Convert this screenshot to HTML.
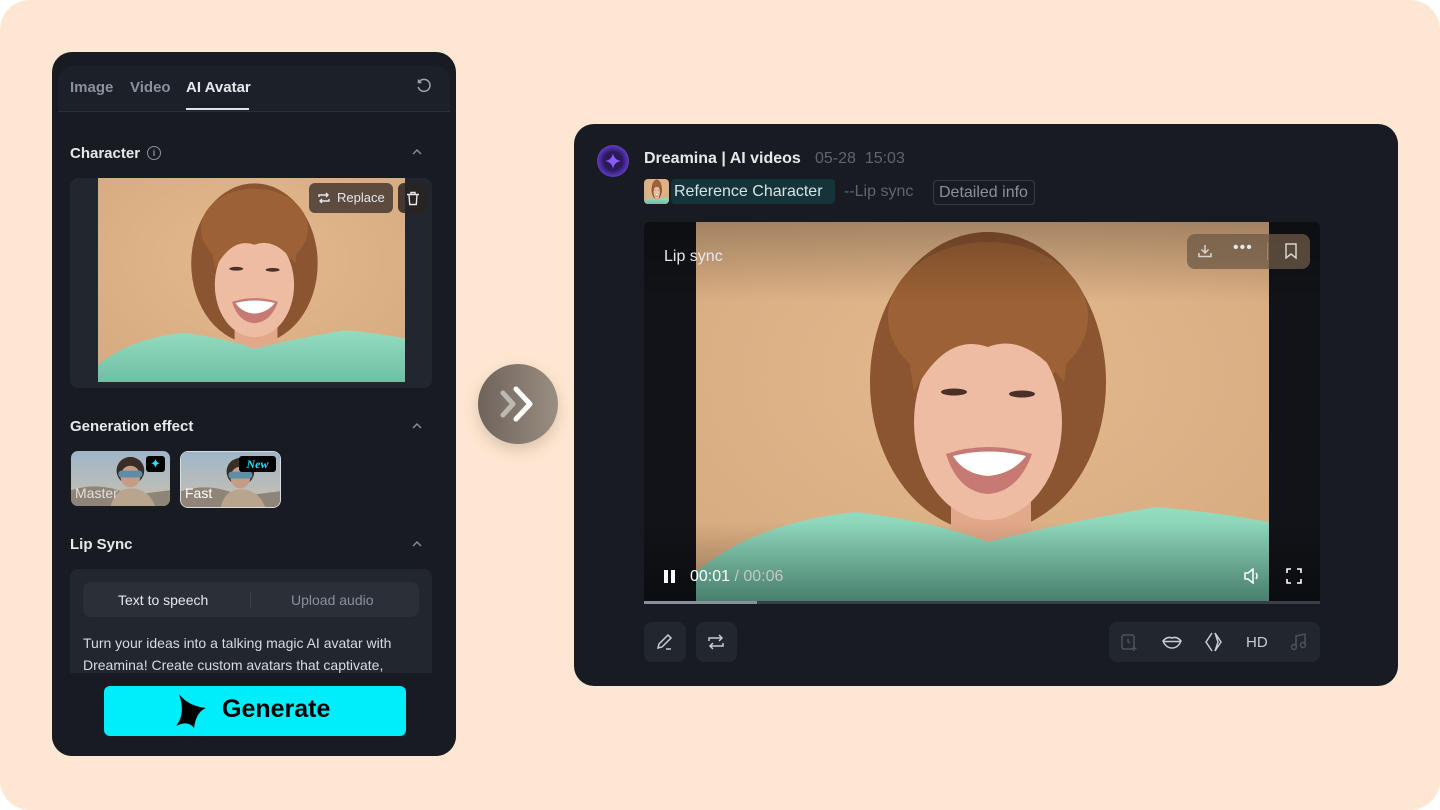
<!DOCTYPE html>
<html><head><meta charset="utf-8"><style>
*{margin:0;padding:0;box-sizing:border-box}
body{width:1440px;height:810px;background:#ffffff;font-family:"Liberation Sans",sans-serif;overflow:hidden;position:relative}
.bg{position:absolute;left:0;top:0;width:1440px;height:810px;background:#fde7d2;border-radius:30px}
.abs{position:absolute}
.panel{background:#181b22;border-radius:20px}
.t{position:absolute;white-space:nowrap}
</style></head><body>
<div class="bg"></div>
<svg width="0" height="0" style="position:absolute">
<defs>
<symbol id="por" viewBox="0 0 573 382" preserveAspectRatio="none">
<defs>
<radialGradient id="bgg" cx="0.5" cy="0.4" r="0.7"><stop offset="0" stop-color="#e3b98e"/><stop offset="1" stop-color="#d7ab80"/></radialGradient>
<linearGradient id="sh" x1="0" y1="0" x2="0" y2="1"><stop offset="0" stop-color="#95dcc0"/><stop offset="1" stop-color="#6fbfa5"/></linearGradient>
</defs>
<rect width="573" height="382" fill="url(#bgg)"/>
<ellipse cx="292" cy="160" rx="118" ry="150" fill="#8a5530"/>
<ellipse cx="292" cy="95" rx="100" ry="75" fill="#9c6236"/>
<rect x="255" y="260" width="80" height="70" fill="#e2a88a"/>
<ellipse cx="292" cy="200" rx="74" ry="98" fill="#edbca2"/>
<path d="M212 130 Q292 50 372 130 L368 160 Q330 110 292 125 Q250 110 218 170 Z" fill="#9c6236"/>
<ellipse cx="258" cy="170" rx="13" ry="3.5" fill="#4a3026"/>
<ellipse cx="326" cy="172" rx="13" ry="3.5" fill="#4a3026"/>
<path d="M250 232 Q292 218 336 232 Q322 270 292 272 Q262 270 250 232Z" fill="#c77a74"/>
<path d="M257 234 Q292 225 330 234 Q316 252 292 254 Q268 252 257 234Z" fill="#fff"/>
<path d="M0 382 L0 350 Q60 300 160 290 Q240 300 292 320 Q370 300 460 285 Q520 290 573 300 L573 382 Z" fill="url(#sh)"/>
</symbol>
<symbol id="moto" viewBox="0 0 100 56" preserveAspectRatio="none">
<defs><linearGradient id="sk" x1="0" y1="0" x2="0" y2="1"><stop offset="0" stop-color="#9fb6c8"/><stop offset="1" stop-color="#c9c0b0"/></linearGradient></defs>
<rect width="100" height="56" fill="url(#sk)"/>
<path d="M0 40 Q30 30 60 45 L100 40 L100 56 L0 56Z" fill="#8f8478"/>
<ellipse cx="60" cy="20" rx="14" ry="14" fill="#3a2d26"/>
<ellipse cx="60" cy="26" rx="10" ry="11" fill="#c79c84"/>
<rect x="48" y="20" width="24" height="7" rx="3" fill="#5d8ea8"/>
<path d="M40 56 Q45 38 60 38 Q78 38 85 56Z" fill="#b9a58e"/>
</symbol>
</defs></svg>

<!-- LEFT PANEL -->
<div class="abs panel" style="left:52px;top:52px;width:404px;height:704px;overflow:hidden">
  <div class="abs" style="left:6px;top:14px;width:392px;height:46px;background:#1c2029;border-bottom:1px solid #2a2e37;border-radius:14px 14px 0 0"></div>
  <div class="t" style="left:18px;top:27px;font-size:15px;color:#8a909b;font-weight:bold">Image</div>
  <div class="t" style="left:78px;top:27px;font-size:15px;color:#8a909b;font-weight:bold">Video</div>
  <div class="t" style="left:134px;top:27px;font-size:15px;color:#e6e8ec;font-weight:bold">AI Avatar</div>
  <div class="abs" style="left:134px;top:56px;width:63px;height:2px;background:#dfe3ea"></div>
  <svg class="abs" style="left:364px;top:26px" width="16" height="16" viewBox="0 0 16 16" fill="none" stroke="#a0a5ae" stroke-width="1.5"><path d="M3 4 A6 6 0 1 1 2.2 9"/><path d="M2.5 1.5 V4.5 H5.5"/></svg>

  <div class="t" style="left:18px;top:93px;font-size:15px;color:#e6e8ec;font-weight:bold">Character</div>
  <div class="abs" style="left:95px;top:94px;width:14px;height:14px;border:1.3px solid #8a909b;border-radius:50%;color:#8a909b;font-size:9px;text-align:center;line-height:12px;font-weight:bold">i</div>
  <svg class="abs" style="left:359px;top:96px" width="12" height="8" viewBox="0 0 12 8" fill="none" stroke="#8a909b" stroke-width="1.4"><path d="M2 6 L6 2 L10 6"/></svg>

  <div class="abs" style="left:18px;top:126px;width:362px;height:210px;background:#22262e;border-radius:8px;overflow:hidden">
    <svg class="abs" style="left:28px;top:0" width="307" height="204"><use href="#por" width="307" height="204"/></svg>
    <div class="abs" style="left:239px;top:5px;width:84px;height:30px;background:rgba(70,58,50,0.85);border-radius:6px"></div>
    <svg class="abs" style="left:247px;top:13px" width="14" height="14" viewBox="0 0 14 14" fill="none" stroke="#e6e8ec" stroke-width="1.4"><path d="M2 6 V4 H11 M9 2 L11 4 L9 6"/><path d="M12 8 V10 H3 M5 12 L3 10 L5 8"/></svg>
    <div class="t" style="left:267px;top:12px;font-size:13px;color:#e6e8ec">Replace</div>
    <div class="abs" style="left:328px;top:5px;width:30px;height:30px;background:rgba(40,36,34,0.85);border-radius:6px"></div>
    <svg class="abs" style="left:336px;top:13px" width="14" height="15" viewBox="0 0 14 15" fill="none" stroke="#e6e8ec" stroke-width="1.4"><path d="M1 3.5 H13 M5 3.5 V1.5 H9 V3.5 M3 3.5 L3.7 13.5 H10.3 L11 3.5"/></svg>
  </div>

  <div class="t" style="left:18px;top:366px;font-size:15px;color:#e6e8ec;font-weight:bold">Generation effect</div>
  <svg class="abs" style="left:359px;top:370px" width="12" height="8" viewBox="0 0 12 8" fill="none" stroke="#8a909b" stroke-width="1.4"><path d="M2 6 L6 2 L10 6"/></svg>
  <div class="abs" style="left:19px;top:399px;width:99px;height:55px;border-radius:7px;overflow:hidden">
    <svg width="99" height="55"><use href="#moto" width="99" height="55"/></svg>
    <div class="abs" style="left:75px;top:5px;width:19px;height:16px;background:#000;border-radius:3px;color:#1ee8ff;font-size:13px;text-align:center;line-height:16px">✦</div>
    <div class="t" style="left:4px;top:34px;font-size:14px;color:rgba(255,255,255,.75)">Master</div>
  </div>
  <div class="abs" style="left:128px;top:399px;width:101px;height:57px;border-radius:8px;overflow:hidden;border:1.5px solid #d8dde4">
    <svg width="99" height="55"><use href="#moto" width="99" height="55"/></svg>
    <div class="abs" style="left:58px;top:4px;width:37px;height:16px;background:#000;border-radius:3px;color:#1ee8ff;font-size:12px;text-align:center;line-height:16px;font-style:italic;font-weight:bold;font-family:'Liberation Serif',serif">New</div>
    <div class="t" style="left:4px;top:33px;font-size:14px;color:#fff">Fast</div>
  </div>

  <div class="t" style="left:18px;top:484px;font-size:15px;color:#e6e8ec;font-weight:bold">Lip Sync</div>
  <svg class="abs" style="left:359px;top:488px" width="12" height="8" viewBox="0 0 12 8" fill="none" stroke="#8a909b" stroke-width="1.4"><path d="M2 6 L6 2 L10 6"/></svg>
  <div class="abs" style="left:18px;top:517px;width:362px;height:110px;background:#22262e;border-radius:8px 8px 0 0"></div>
  <div class="abs" style="left:31px;top:530px;width:336px;height:35px;background:#2b2f38;border-radius:8px"></div>
  <div class="abs" style="left:198px;top:539px;width:1px;height:18px;background:#3a3e47"></div>
  <div class="t" style="left:66px;top:540px;font-size:14px;color:#e6e8ec">Text to speech</div>
  <div class="t" style="left:239px;top:540px;font-size:14px;color:#8a909b">Upload audio</div>
  <div class="t" style="left:31px;top:580px;font-size:14px;color:#d8dbe0;line-height:22px">Turn your ideas into a talking magic AI avatar with<br>Dreamina! Create custom avatars that captivate,</div>
  <div class="abs" style="left:0;top:621px;width:404px;height:83px;background:#181b22"></div>
  <div class="abs" style="left:52px;top:634px;width:302px;height:50px;background:#00eefc;border-radius:6px"></div>
  <svg class="abs" style="left:124px;top:640px" width="32" height="38" viewBox="0 0 32 38"><path d="M3 2 Q12 14 30 16 Q20 20 18 36 Q12 28 0 34 Q10 22 3 2Z" fill="#000"/></svg>
  <div class="t" style="left:170px;top:643px;font-size:25px;color:#000;font-weight:bold">Generate</div>
</div>

<!-- ARROW -->
<div class="abs" style="left:478px;top:364px;width:80px;height:80px;border-radius:50%;background:linear-gradient(90deg,#6e635b,#9a8e82);box-shadow:0 6px 14px rgba(120,90,60,.25)"></div>
<svg class="abs" style="left:495px;top:380px" width="50" height="50" viewBox="0 0 50 50" fill="none" stroke-linecap="round" stroke-linejoin="round"><path d="M8 13 L18 24 L8 35" stroke="#bdb8b2" stroke-width="5"/><path d="M21 9 L35 24 L21 39" stroke="#fff" stroke-width="5"/></svg>

<!-- RIGHT PANEL -->
<div class="abs panel" style="left:574px;top:124px;width:824px;height:562px;overflow:hidden">
  <div class="abs" style="left:23px;top:21px;width:32px;height:32px;border-radius:50%;background:radial-gradient(circle,#2a1a5a 40%,#6a3fd8 75%)"></div>
  <svg class="abs" style="left:31px;top:29px" width="16" height="16" viewBox="0 0 16 16"><path d="M8 0 Q9 7 16 8 Q9 9 8 16 Q7 9 0 8 Q7 7 8 0Z" fill="#8a5cf6"/></svg>
  <div class="t" style="left:70px;top:26px;font-size:16px;color:#e6e8ec;font-weight:bold">Dreamina | AI videos</div>
  <div class="t" style="left:241px;top:26px;font-size:16px;color:#5f6570">05-28&nbsp;&nbsp;15:03</div>
  <div class="abs" style="left:70px;top:55px;width:25px;height:25px;border-radius:4px;overflow:hidden"><svg width="25" height="25"><use href="#por" width="25" height="25"/></svg></div>
  <div class="abs" style="left:97px;top:55px;width:164px;height:25px;background:#15343a;border-radius:4px"></div>
  <div class="t" style="left:100px;top:59px;font-size:16px;color:#d8e2e6">Reference Character</div>
  <div class="t" style="left:270px;top:59px;font-size:16px;color:#5f6570">--Lip sync</div>
  <div class="abs" style="left:359px;top:56px;width:102px;height:25px;border:1px solid #363a44;border-radius:4px"></div>
  <div class="t" style="left:365px;top:60px;font-size:16px;color:#8a909b">Detailed info</div>

  <div class="abs" style="left:70px;top:98px;width:676px;height:382px;background:#111318;border-radius:6px 6px 0 0;overflow:hidden">
    <svg class="abs" style="left:52px;top:0" width="573" height="382"><use href="#por" width="573" height="382"/></svg>
    <div class="abs" style="left:0;top:0;width:676px;height:80px;background:linear-gradient(rgba(0,0,0,.25),transparent)"></div>
    <div class="abs" style="left:0;top:300px;width:676px;height:82px;background:linear-gradient(transparent,rgba(0,0,0,.35))"></div>
    <div class="t" style="left:20px;top:26px;font-size:16px;color:#e6e8ec">Lip sync</div>
    <div class="abs" style="left:543px;top:12px;width:123px;height:35px;background:rgba(110,90,70,.75);border-radius:8px"></div>
    <svg class="abs" style="left:553px;top:21px" width="16" height="16" viewBox="0 0 16 16" fill="none" stroke="#d8d4cf" stroke-width="1.5"><path d="M8 2 V10 M4.5 6.5 L8 10 L11.5 6.5 M2 10 V13.5 H14 V10"/></svg>
    <div class="t" style="left:589px;top:17px;font-size:16px;color:#e6e8ec;letter-spacing:1px">•••</div>
    <div class="abs" style="left:623px;top:20px;width:1px;height:18px;background:rgba(255,255,255,.2)"></div>
    <svg class="abs" style="left:640px;top:21px" width="14" height="16" viewBox="0 0 14 16" fill="none" stroke="#d8d4cf" stroke-width="1.5"><path d="M2 1 H12 V15 L7 11 L2 15Z"/></svg>
    <div class="abs" style="left:20px;top:348px;width:4px;height:13px;background:#fff"></div>
    <div class="abs" style="left:27px;top:348px;width:4px;height:13px;background:#fff"></div>
    <div class="t" style="left:46px;top:346px;font-size:16px;color:#fff">00:01 <span style="color:#c6c6c6">/ 00:06</span></div>
    <svg class="abs" style="left:599px;top:346px" width="20" height="16" viewBox="0 0 20 16" fill="none" stroke="#fff" stroke-width="1.5"><path d="M2 5 H5 L10 1 V15 L5 11 H2Z"/><path d="M13 5 Q15 8 13 11"/></svg>
    <svg class="abs" style="left:642px;top:346px" width="16" height="16" viewBox="0 0 16 16" fill="none" stroke="#fff" stroke-width="1.6"><path d="M1 5 V1 H5 M11 1 H15 V5 M15 11 V15 H11 M5 15 H1 V11"/></svg>
    <div class="abs" style="left:0;top:379px;width:676px;height:3px;background:#3a3e46"></div>
    <div class="abs" style="left:0;top:379px;width:113px;height:3px;background:#8a8f98"></div>
  </div>

  <div class="abs" style="left:70px;top:498px;width:42px;height:40px;background:#22262e;border-radius:8px"></div>
  <svg class="abs" style="left:82px;top:509px" width="18" height="18" viewBox="0 0 18 18" fill="none" stroke="#c9ccd2" stroke-width="1.5"><path d="M2 15 L3 11 L12 2 L15 5 L6 14 Z M10 16 H15"/></svg>
  <div class="abs" style="left:122px;top:498px;width:41px;height:40px;background:#22262e;border-radius:8px"></div>
  <svg class="abs" style="left:133px;top:509px" width="18" height="18" viewBox="0 0 18 18" fill="none" stroke="#c9ccd2" stroke-width="1.5"><path d="M2 8 V5 H15 M12 2 L15 5 L12 8"/><path d="M16 10 V13 H3 M6 16 L3 13 L6 10"/></svg>
  <div class="abs" style="left:535px;top:498px;width:211px;height:40px;background:#22262e;border-radius:8px"></div>
  <svg class="abs" style="left:546px;top:509px" width="18" height="19" viewBox="0 0 18 19" fill="none" stroke="#4c515a" stroke-width="1.5"><rect x="2" y="2" width="12" height="14" rx="2"/><path d="M8 6 V9 L10 10 M14 13 V18 M11.5 15.5 H16.5"/></svg>
  <svg class="abs" style="left:587px;top:510px" width="22" height="16" viewBox="0 0 22 16" fill="none" stroke="#c9ccd2" stroke-width="1.5"><path d="M2 7 Q6 2 11 4 Q16 2 20 7 Q17 14 11 14 Q5 14 2 7Z M3 7.5 H19"/></svg>
  <svg class="abs" style="left:630px;top:508px" width="22" height="20" viewBox="0 0 22 20" fill="none" stroke="#c9ccd2" stroke-width="1.5"><path d="M8 1 L2 10 L8 19 M11 1 L17 10 L11 19 L14 10 L11 1"/></svg>
  <div class="t" style="left:672px;top:510px;font-size:15px;color:#c9ccd2">HD</div>
  <svg class="abs" style="left:716px;top:509px" width="18" height="18" viewBox="0 0 18 18" fill="none" stroke="#4c515a" stroke-width="1.5"><path d="M6 14 V3 L15 1 V12"/><circle cx="4" cy="14" r="2.5"/><circle cx="13" cy="12" r="2.5"/></svg>
</div>
</body></html>
